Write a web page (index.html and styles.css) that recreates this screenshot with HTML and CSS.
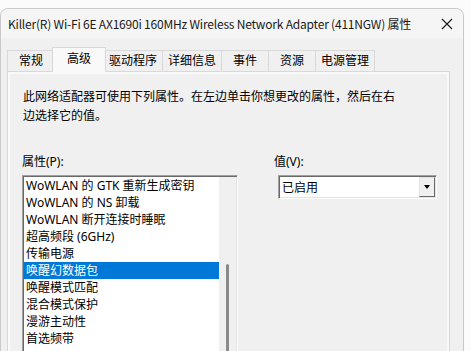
FILE: index.html
```html
<!DOCTYPE html>
<html lang="zh-CN">
  <head>
    <meta charset="UTF-8" />
    <title>属性</title>
    <link rel="stylesheet" href="styles.css">
  </head>
  <body>
    <div class="window">
      <!-- 标题栏 -->
      <div class="titlebar">
        <span class="title">Killer(R) Wi-Fi 6E AX1690i 160MHz Wireless Network Adapter (411NGW) 属性</span>
        <svg class="close" width="12" height="12" viewBox="0 0 12 12">
          <path d="M1 1 L11 11 M11 1 L1 11" stroke="#1a1a1a" stroke-width="1.1" fill="none" />
        </svg>
      </div>

      <div class="body">
        <div class="tabs">
          <div class="tab">常规</div>
          <div class="tab active">高级</div>
          <div class="tab">驱动程序</div>
          <div class="tab">详细信息</div>
          <div class="tab">事件</div>
          <div class="tab">资源</div>
          <div class="tab">电源管理</div>
        </div>

        <div class="panel">
          <div class="page">
            <p class="desc">此网络适配器可使用下列属性。在左边单击你想更改的属性，然后在右<br />边选择它的值。</p>

            <div class="fields">
              <div class="col-left">
                <div class="label">属性(P):</div>
                <div class="listbox">
                  <ul class="items">
                    <li>WoWLAN 的 GTK 重新生成密钥</li>
                    <li>WoWLAN 的 NS 卸载</li>
                    <li>WoWLAN 断开连接时睡眠</li>
                    <li>超高频段 (6GHz)</li>
                    <li>传输电源</li>
                    <li class="selected">唤醒幻数据包</li>
                    <li>唤醒模式匹配</li>
                    <li>混合模式保护</li>
                    <li>漫游主动性</li>
                    <li>首选频带</li>
                  </ul>
                  <div class="scrollbar"><div class="thumb"></div></div>
                </div>
              </div>

              <div class="col-right">
                <div class="label">值(V):</div>
                <div class="select">
                  <span class="value">已启用</span>
                  <span class="drop"><span class="arrow"></span></span>
                </div>
              </div>
            </div>
          </div>
        </div>
      </div>
    </div>
  </body>
</html>
```

FILE: styles.css
```css
html,
body {
  margin: 0;
  height: 351px;
  overflow: hidden;
  background: #fbfbfb;
}
body {
  font-family: "Noto Sans", "Noto Sans CJK SC", sans-serif;
  font-size: 12px;
  color: #000;
}
.window {
  margin-top: 8px;
  width: 462px;
  height: 400px;
  border: 1px solid #c9c9c9;
  border-bottom: none;
  border-radius: 8px 8px 0 0;
  overflow: hidden;
  background: #f0f0f0;
}
.titlebar {
  height: 29px;
  background: #f5f5f5;
  display: flex;
  align-items: center;
  justify-content: space-between;
  padding: 0 10px 0 7px;
}
.title {
  font-family: "Noto Sans CJK SC", sans-serif;
  letter-spacing: -0.2px;
  color: #1a1a1a;
  white-space: nowrap;
}
.close {
  margin-top: 1px;
}
.body {
  padding: 10px 0 0 6px;
}
.tabs {
  display: flex;
  height: 23px;
  align-items: flex-end;
  position: relative;
  z-index: 1;
}
.tab {
  height: 20px;
  line-height: 19px;
  min-width: 36px;
  padding: 0 5px;
  text-align: center;
  border: 1px solid #d9d9d9;
  border-bottom: none;
  margin-left: -1px;
  background: #f0f0f0;
  color: #000;
}
.tab:first-child {
  margin-left: 0;
}
.tab.active {
  height: 24px;
  line-height: 21px;
  min-width: 42px;
  margin: 0 -2px 0 -3px;
  background: #f9f9f9;
  position: relative;
  top: 1px;
}
.panel {
  width: 443px;
  height: 330px;
  border: 1px solid #d9d9d9;
  background: #f9f9f9;
  padding: 2px;
  box-sizing: border-box;
}
.page {
  background: #f0f0f0;
  height: 100%;
  padding: 13px 0 0 13px;
  box-sizing: border-box;
}
.desc {
  margin: 0;
  line-height: 19px;
}
.fields {
  display: flex;
  margin-top: 27px;
}
.label {
  height: 19px;
  line-height: 19px;
  margin-bottom: 4px;
}
.col-left {
  width: 216px;
  margin-left: -1px;
}
.listbox {
  display: flex;
  height: 200px;
  background: #fff;
  border: 1px solid;
  border-color: #a0a0a0 #ffffff #ffffff #a0a0a0;
  box-shadow: inset 1px 1px 0 #696969, inset -1px 0 0 #e3e3e3;
  padding: 1px 0 0 1px;
}
.items {
  list-style: none;
  margin: 0;
  padding: 0;
  width: 196px;
}
.items li {
  height: 17px;
  line-height: 18px;
  padding-left: 2px;
  white-space: nowrap;
}
.items li.selected {
  background: #0078d7;
  color: #fff;
}
.scrollbar {
  width: 17px;
  background: #f0f0f0;
  margin-right: 1px;
  display: flex;
  justify-content: center;
}
.thumb {
  width: 3px;
  margin-top: 87px;
  background: #8a8a8a;
  border-radius: 2px 2px 0 0;
}
.col-right {
  margin-left: 36px;
}
.select {
  margin-left: 4px;
  width: 159px;
  height: 24px;
  box-sizing: border-box;
  display: flex;
  align-items: center;
  justify-content: space-between;
  background: #fff;
  border: 1px solid;
  border-color: #a0a0a0 #ffffff #ffffff #a0a0a0;
  box-shadow: inset 1px 1px 0 #696969, inset -1px -1px 0 #e3e3e3;
}
.value {
  padding-left: 3px;
}
.drop {
  width: 16px;
  height: 20px;
  margin-right: 1px;
  background: #f0f0f0;
  border: 1px solid;
  border-color: #e3e3e3 #696969 #696969 #e3e3e3;
  box-sizing: border-box;
  display: flex;
  align-items: center;
  justify-content: center;
}
.arrow {
  width: 0;
  height: 0;
  border-left: 3.5px solid transparent;
  border-right: 3.5px solid transparent;
  border-top: 4px solid #000;
}
```
